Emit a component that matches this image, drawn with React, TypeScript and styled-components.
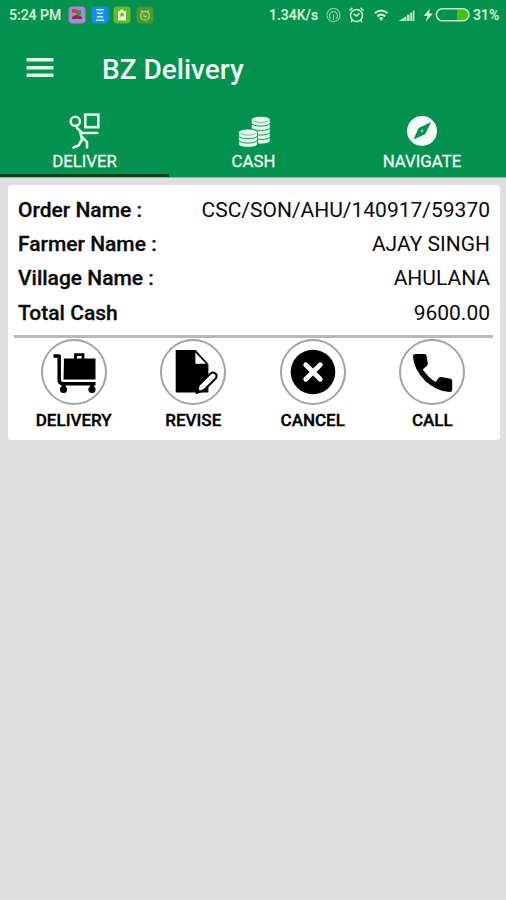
import React from 'react';
import styled, { createGlobalStyle } from 'styled-components';

const GlobalStyle = createGlobalStyle`
  * { box-sizing: border-box; }
  body { margin: 0; background: #dfdfdf; font-family: Roboto, "Liberation Sans", sans-serif; }
  svg { display: block; flex: none; }
`;

const Screen = styled.div`
  width: 506px;
  height: 900px;
  background: #dfdfdf;
  overflow: hidden;
`;

const Header = styled.header`
  height: 178px;
  background: #02914f;
  color: #f2fbf2;
  border-bottom: 1px solid #7fbf9d;
`;

const StatusBar = styled.div`
  height: 30px;
  display: flex;
  align-items: center;
  padding: 0 7px 0 9px;
  color: #cdeccf;
  font-size: 14px;
  font-weight: 500;
  -webkit-text-stroke: 0.2px currentColor;
`;

const StatusText = styled.span<{ $width: number }>`
  width: ${(p) => p.$width}px;
  white-space: nowrap;
`;

const AppIcons = styled.div`
  display: flex;
  gap: 4.5px;
  margin-left: 7px;
  flex: 1;
`;

const AppBar = styled.div`
  height: 76px;
  display: flex;
  align-items: center;
  padding-left: 26px;
`;

const MenuButton = styled.button`
  width: 28px;
  height: 20px;
  margin-top: 0;
  padding: 0;
  border: 0;
  background: none;
`;

const Title = styled.h1`
  margin: 3px 0 0 48px;
  font-size: 28px;
  line-height: 34px;
  font-weight: 500;
`;

const Tabs = styled.nav`
  height: 71px;
  display: grid;
  grid-template-columns: 169px 169px 168px;
`;

const Tab = styled.div<{ $active?: boolean }>`
  display: flex;
  flex-direction: column;
  align-items: center;
  padding-top: 4px;
  border-bottom: 3px solid ${(p) => (p.$active ? '#153f18' : 'transparent')};
`;

const TabLabel = styled.span`
  font-size: 16.8px;
  line-height: 20px;
  margin-top: 1px;
  -webkit-text-stroke: 0.3px currentColor;
`;

const Card = styled.section`
  width: 492px;
  height: 255px;
  margin: 7px 0 0 8px;
  padding: 8px 7px 0 6px;
  background: #fff;
  border-radius: 4px;
`;

const Details = styled.dl`
  margin: 0;
  height: 142px;
`;

const Row = styled.div`
  display: flex;
  justify-content: space-between;
  height: 34.2px;
  line-height: 35px;
  padding: 0 3px 0 4px;
  font-size: 21px;
  color: #0a0a0a;
`;

const Term = styled.dt`
  font-weight: 500;
  -webkit-text-stroke: 0.3px currentColor;
`;

const Value = styled.dd`
  margin: 0;
`;

const Actions = styled.div`
  display: grid;
  grid-template-columns: repeat(4, 119.5px);
  border-top: 3px solid #b9b9b9;
  padding-top: 1px;
`;

const Action = styled.button`
  display: flex;
  flex-direction: column;
  align-items: center;
  padding: 0;
  border: 0;
  background: none;
  font-family: inherit;
  color: #000;
`;

const Ring = styled.span`
  width: 66px;
  height: 66px;
  display: flex;
  align-items: center;
  justify-content: center;
  border: 2px solid #a3a3a3;
  border-radius: 50%;
`;

const ActionLabel = styled.span`
  margin-top: 5px;
  font-size: 17px;
  line-height: 20px;
  font-weight: 500;
  -webkit-text-stroke: 0.35px currentColor;
`;

const DeliverIcon = () => (
  <svg width="40" height="40" viewBox="65 110 40 40" fill="none" stroke="#dff8ea" strokeWidth="2.6" strokeLinecap="round" strokeLinejoin="round">
    <circle cx="75.3" cy="121.3" r="4.6" />
    <rect x="85.3" y="114.6" width="13" height="12.6" strokeLinejoin="miter" />
    <path d="M77 128 82 132.7 97.5 133M80 131 82 139.5 78.5 145.5 73.5 147.5M82 137 87 142 87 147.5" />
  </svg>
);

const CashIcon = () => (
  <svg width="40" height="40" viewBox="233 110 40 40">
    <g fill="#dff8ea" stroke="#02914f" strokeWidth="0.9">
      {[137.5, 133, 128.5, 124, 119.5].map((y) => (
        <path key={y} d={`M250.200 ${y}v3.400c0 4.200 19 4.200 19 0v-3.400c0-4.200-19-4.200-19 0z`} />
      ))}
      {[140.8, 136.5, 132.2].map((y) => (
        <path key={y} d={`M237.500 ${y}v3.400c0 4.200 19 4.200 19 0v-3.400c0-4.200-19-4.200-19 0z`} />
      ))}
    </g>
    <path d="M252 120.800q7.700 3.400 15.400 0M239.300 133.500q7.700 3.400 15.400 0" fill="none" stroke="#5db88b" strokeWidth=".8" />
  </svg>
);

const CompassIcon = () => (
  <svg width="40" height="40" viewBox="402 110 40 40">
    <circle cx="422" cy="131" r="15" fill="#f4fff9" />
    <path d="M431 122.2 425.3 134 413.5 139.5 418.7 128Z" fill="#02914f" />
    <circle cx="422" cy="131" r="1.4" fill="#8fd0b0" />
  </svg>
);

const TrolleyIcon = () => (
  <svg width="62" height="62" viewBox="43 341 62 62">
    <path d="M53.5 356h5.700v24q0 3.700 3.700 3.700H95.500" fill="none" stroke="#000" strokeWidth="3.500" strokeLinejoin="round" />
    <path d="M64 358.500h31.500v21H63.500Z" />
    <path d="M75.500 359v-4.300h7.500v4.300" fill="none" stroke="#000" strokeWidth="2.8" />
    <path d="M61.500 384h4v4h-4zM90 384h4v4h-4z" />
    <circle cx="63.500" cy="389.5" r="3.600" />
    <circle cx="92" cy="389.5" r="3.600" />
  </svg>
);

const ReviseIcon = () => (
  <svg width="62" height="62" viewBox="162.3 341 62 62">
    <path d="M176 350h20L208.700 364v28.500H176Z" />
    <path d="M195.700 352.500v11.200h10.600Z" fill="#fff" />
    <path d="M196.800 393 199.200 385 211 373.400Q213.500 371.700 215.700 373.600T216.200 378.200L204.500 390Z" fill="#fff" stroke="#000" strokeWidth="2" strokeLinejoin="round" />
    <path d="M196 394 197.800 388 201.500 391.800Z" />
  </svg>
);

const CancelIcon = () => (
  <svg width="62" height="62" viewBox="282 341 62 62">
    <circle cx="313" cy="372" r="22.3" />
    <path d="m305.700 364.700 14.600 14.600m0-14.600-14.600 14.600" stroke="#fff" strokeWidth="4.800" strokeLinecap="round" />
  </svg>
);

const CallIcon = () => (
  <svg width="62" height="62" viewBox="401 341 62 62">
    <path d="M415 354H424.500Q426.400 354 426.600 356L427.800 363.500Q428 365.200 426.500 366.200L422.800 369.200Q428 377.500 435.700 382L438.700 378Q439.700 376.700 441.500 377L450.500 378.700Q452.200 379 452.200 380.700V389.500Q452.200 392 449.500 392Q436 391 425 380.700Q414 369.500 412.900 356.500Q412.800 354 415 354Z" />
  </svg>
);

const NotificationIcons = () => (
  <AppIcons>
    <svg width="18" height="18" viewBox="0 0 18 18">
      <rect x=".5" y=".5" width="17" height="17" rx="4" fill="#a78ad0" />
      <path d="M4 3h5v4H4z" fill="#d53c5c" />
      <path d="M9 4h4v5H8z" fill="#3d9152" />
      <path d="M4 11q4-4 10 0v2H4z" fill="#8b2b4d" />
    </svg>
    <svg width="18" height="18" viewBox="0 0 18 18">
      <rect x=".5" y=".5" width="17" height="17" rx="4" fill="#168cf0" />
      <path d="M5 3.800h8M5 14.200h8M6 6.500q3 2 6 0M6 11.500q3-2 6 0" fill="none" stroke="#c9e8ff" strokeWidth="1.6" />
    </svg>
    <svg width="18" height="18" viewBox="0 0 18 18">
      <rect x=".5" y=".5" width="17" height="17" rx="4" fill="#62bd24" />
      <path d="M7.500 3.500h3V5H13v9.500H5V5h2.500z" fill="#effce0" />
      <path d="M7.300 7h3.400v3.500H7.300z" fill="#62bd24" />
    </svg>
    <svg width="18" height="18" viewBox="0 0 18 18">
      <rect x=".5" y=".5" width="17" height="17" rx="4" fill="#4b9a2c" />
      <g fill="none" stroke="#a9d47c" strokeWidth="1.300">
        <circle cx="9" cy="9.800" r="4.300" />
        <path d="M5 4.500 7 6m6-1.500L11 6M8 8v2.500h3" />
      </g>
    </svg>
  </AppIcons>
);

const SystemIcons = () => (
  <svg width="151" height="20" viewBox="322 5 151 20" fill="none" stroke="#cdeccf" strokeWidth="1.600">
    <g stroke="#8ccda4" strokeWidth="1.200">
      <circle cx="333.500" cy="15" r="6.600" />
      <path d="M330.800 18.600a4 4 0 1 1 5.400 0M333.500 14.500V20" />
    </g>
    <circle cx="356.500" cy="15.500" r="6" />
    <path d="m349.500 10.500 3-2.700m11 2.700-3-2.700M353.500 13.800l3 2.200 3-2.700M352.500 20.300l-1.500 1.700m9.500-1.700 1.500 1.700" />
    <path d="M374.800 13.200q6.400-5.200 12.800 0M377.300 16.300q3.900-3.200 7.800 0" strokeWidth="2.200" />
    <path d="m378.800 18 2.400 3 2.400-3q-2.400-1.900-4.800 0" fill="#cdeccf" stroke="none" />
    <path d="M398.500 21 406.500 16v5ZM407 21V14.500h2.700V21zM410.200 21V12.500h2.300V21zM413 21V10.500h1.500V21z" fill="#b9e2c0" stroke="none" />
    <path d="m430 8.500-6.500 7.500h4l-2 6 7.500-8.500h-4z" fill="#cdeccf" stroke="none" />
    <path d="M457 9.500h6.500a5.500 5.500 0 0 1 0 11H457z" fill="#43c10b" stroke="none" />
    <rect x="436.300" y="8.800" width="32.700" height="12" rx="6" />
  </svg>
);

const orderDetails = [
  { label: 'Order Name :', value: 'CSC/SON/AHU/140917/59370' },
  { label: 'Farmer Name :', value: 'AJAY SINGH' },
  { label: 'Village Name :', value: 'AHULANA' },
  { label: 'Total Cash', value: '9600.00' },
];

const actions = [
  { label: 'DELIVERY', Icon: TrolleyIcon },
  { label: 'REVISE', Icon: ReviseIcon },
  { label: 'CANCEL', Icon: CancelIcon },
  { label: 'CALL', Icon: CallIcon },
];

const tabs = [
  { label: 'DELIVER', Icon: DeliverIcon, active: true },
  { label: 'CASH', Icon: CashIcon, active: false },
  { label: 'NAVIGATE', Icon: CompassIcon, active: false },
];

export default function App() {
  return (
    <>
      <GlobalStyle />
      <Screen>
        <Header>
          <StatusBar>
            <StatusText $width={52}>5:24 PM</StatusText>
            <NotificationIcons />
            <StatusText $width={53}>1.34K/s</StatusText>
            <SystemIcons />
            <StatusText $width={26}>31%</StatusText>
          </StatusBar>
          <AppBar>
            <MenuButton aria-label="Menu">
              <svg width="28" height="20" viewBox="0 0 28 20" fill="#e9f8e8">
                <path d="M.5 0h27v3.500H.500zM.500 8h27v3.500H.500zM.500 15.500h27V19H.500z" />
              </svg>
            </MenuButton>
            <Title>BZ Delivery</Title>
          </AppBar>
          <Tabs>
            {tabs.map(({ label, Icon, active }) => (
              <Tab key={label} $active={active}>
                <Icon />
                <TabLabel>{label}</TabLabel>
              </Tab>
            ))}
          </Tabs>
        </Header>
        <Card>
          <Details>
            {orderDetails.map((d) => (
              <Row key={d.label}>
                <Term>{d.label}</Term>
                <Value>{d.value}</Value>
              </Row>
            ))}
          </Details>
          <Actions>
            {actions.map(({ label, Icon }) => (
              <Action key={label}>
                <Ring><Icon /></Ring>
                <ActionLabel>{label}</ActionLabel>
              </Action>
            ))}
          </Actions>
        </Card>
      </Screen>
    </>
  );
}
